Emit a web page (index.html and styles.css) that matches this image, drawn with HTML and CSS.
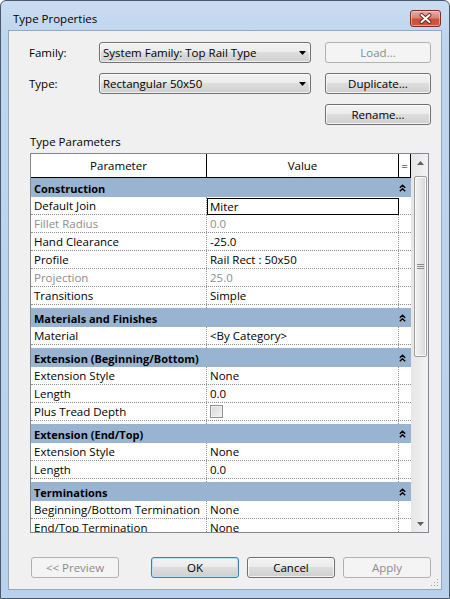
FILE: index.html
```html
<!DOCTYPE html>
<html>
<head>
<meta charset="utf-8">
<title>Type Properties</title>
<link rel="stylesheet" href="styles.css">
</head>
<body>
<div class="window">
  <div class="titlebar">
    <span class="title">Type Properties</span>
    <div class="close">
      <svg width="13" height="11" viewBox="0 0 13 11"><path d="M2.5 2 L10.5 9 M10.5 2 L2.5 9" stroke="#6a2418" stroke-width="3.8" stroke-linecap="round"/><path d="M2.5 2 L10.5 9 M10.5 2 L2.5 9" stroke="#ffffff" stroke-width="2" stroke-linecap="round"/></svg>
    </div>
  </div>
  <div class="client">
    <div class="row">
      <span class="label">Family:</span>
      <div class="combo"><span>System Family: Top Rail Type</span><svg class="arrow" width="7" height="4" viewBox="0 0 7 4"><path d="M0 0 H7 L3.5 4 Z" fill="#000"/></svg></div>
      <div class="btn disabled">Load...</div>
    </div>
    <div class="row">
      <span class="label">Type:</span>
      <div class="combo"><span>Rectangular 50x50</span><svg class="arrow" width="7" height="4" viewBox="0 0 7 4"><path d="M0 0 H7 L3.5 4 Z" fill="#000"/></svg></div>
      <div class="btn">Duplicate...</div>
    </div>
    <div class="row">
      <span class="label"></span>
      <div class="combo-space"></div>
      <div class="btn">Rename...</div>
    </div>

    <div class="section-label">Type Parameters</div>

    <div class="grid">
      <div class="hdr">
        <div>Parameter</div>
        <div>Value</div>
        <div class="eq">=</div>
      </div>
      <div class="scroll">
        <div class="sb-btn"><svg width="7" height="4" viewBox="0 0 7 4"><path d="M0 4 H7 L3.5 0 Z" fill="#606060"/></svg></div>
        <div class="sb-track">
          <div class="thumb">
            <svg width="7" height="5" viewBox="0 0 7 5"><path d="M0 0.5 H7 M0 2.5 H7 M0 4.5 H7" stroke="#8a8a8a" stroke-width="1"/></svg>
          </div>
        </div>
        <div class="sb-btn"><svg width="7" height="4" viewBox="0 0 7 4"><path d="M0 0 H7 L3.5 4 Z" fill="#606060"/></svg></div>
      </div>
      <div class="rows">
        <div class="band">Construction<svg class="chev" width="7" height="8" viewBox="0 0 7 8"><path d="M0.8 3.8 L3.5 1.2 L6.2 3.8 M0.8 7.3 L3.5 4.7 L6.2 7.3" fill="none" stroke="#000" stroke-width="1.4"/></svg></div>
        <div class="prop"><div>Default Join</div><div class="edit">Miter</div><div></div></div>
        <div class="prop dim"><div>Fillet Radius</div><div>0.0</div><div></div></div>
        <div class="prop"><div>Hand Clearance</div><div>-25.0</div><div></div></div>
        <div class="prop"><div>Profile</div><div>Rail Rect : 50x50</div><div></div></div>
        <div class="prop dim"><div>Projection</div><div>25.0</div><div></div></div>
        <div class="prop"><div>Transitions</div><div>Simple</div><div></div></div>
        <div class="gap"><i></i><i></i><i></i></div>

        <div class="band">Materials and Finishes<svg class="chev" width="7" height="8" viewBox="0 0 7 8"><path d="M0.8 3.8 L3.5 1.2 L6.2 3.8 M0.8 7.3 L3.5 4.7 L6.2 7.3" fill="none" stroke="#000" stroke-width="1.4"/></svg></div>
        <div class="prop"><div>Material</div><div>&lt;By Category&gt;</div><div></div></div>
        <div class="gap"><i></i><i></i><i></i></div>

        <div class="band">Extension (Beginning/Bottom)<svg class="chev" width="7" height="8" viewBox="0 0 7 8"><path d="M0.8 3.8 L3.5 1.2 L6.2 3.8 M0.8 7.3 L3.5 4.7 L6.2 7.3" fill="none" stroke="#000" stroke-width="1.4"/></svg></div>
        <div class="prop"><div>Extension Style</div><div>None</div><div></div></div>
        <div class="prop"><div>Length</div><div>0.0</div><div></div></div>
        <div class="prop"><div>Plus Tread Depth</div><div><span class="chk"></span></div><div></div></div>
        <div class="gap"><i></i><i></i><i></i></div>

        <div class="band">Extension (End/Top)<svg class="chev" width="7" height="8" viewBox="0 0 7 8"><path d="M0.8 3.8 L3.5 1.2 L6.2 3.8 M0.8 7.3 L3.5 4.7 L6.2 7.3" fill="none" stroke="#000" stroke-width="1.4"/></svg></div>
        <div class="prop"><div>Extension Style</div><div>None</div><div></div></div>
        <div class="prop"><div>Length</div><div>0.0</div><div></div></div>
        <div class="gap"><i></i><i></i><i></i></div>

        <div class="band">Terminations<svg class="chev" width="7" height="8" viewBox="0 0 7 8"><path d="M0.8 3.8 L3.5 1.2 L6.2 3.8 M0.8 7.3 L3.5 4.7 L6.2 7.3" fill="none" stroke="#000" stroke-width="1.4"/></svg></div>
        <div class="prop"><div>Beginning/Bottom Termination</div><div>None</div><div></div></div>
        <div class="prop"><div>End/Top Termination</div><div>None</div><div></div></div>
      </div>
    </div>

    <div class="btnrow">
      <div class="btn disabled wide">&lt;&lt; Preview</div>
      <div class="btn default wide ok">OK</div>
      <div class="btn wide">Cancel</div>
      <div class="btn disabled wide">Apply</div>
    </div>

    <svg class="grip" width="8" height="8" viewBox="0 0 8 8">
      <rect x="6" y="0" width="1" height="1" fill="#a0a0a0"/>
      <rect x="3" y="3" width="1" height="1" fill="#a0a0a0"/>
      <rect x="6" y="3" width="1" height="1" fill="#a0a0a0"/>
      <rect x="0" y="6" width="1" height="1" fill="#a0a0a0"/>
      <rect x="3" y="6" width="1" height="1" fill="#a0a0a0"/>
      <rect x="6" y="6" width="1" height="1" fill="#a0a0a0"/>
    </svg>
  </div>
</div>
</body>
</html>
```

FILE: styles.css
```css
* { box-sizing: border-box; }
html, body { margin: 0; padding: 0; }
body {
  width: 450px;
  height: 599px;
  overflow: hidden;
  background: #ffffff;
  font-family: "Open Sans", "Noto Sans", sans-serif;
  font-size: 11.5px;
  color: #000;
}

.window {
  width: 450px;
  height: 599px;
  border: 1px solid #49596b;
  border-radius: 6px 6px 0 0;
  background: linear-gradient(to bottom, #cadcf1 0px, #bed5ee 40px, #b9d1eb 100%);
  display: flex;
  flex-direction: column;
  padding: 0 7px 8px 7px;
}

.titlebar {
  height: 29px;
  display: flex;
  align-items: flex-start;
  flex-shrink: 0;
}
.title {
  margin: 10px 0 0 5px;
  line-height: 16px;
  font-size: 11.5px;
  color: #000;
}
.close {
  margin: 9px 1px 0 auto;
  width: 31px;
  height: 17px;
  border: 1px solid #7b2e22;
  border-radius: 3px;
  background: linear-gradient(to bottom, #e9ada2 0%, #dc8372 45%, #c9513b 55%, #c95b43 100%);
  box-shadow: inset 0 0 0 1px rgba(255, 220, 210, 0.5);
  display: flex;
  align-items: center;
  justify-content: center;
}

.client {
  flex: 1;
  background: #f0f0f0;
  border: 1px solid #91a8c3;
  display: flex;
  flex-direction: column;
  padding-top: 11px;
  position: relative;
}

.row {
  display: flex;
  align-items: center;
  height: 21px;
  padding-left: 20px;
  margin-bottom: 10px;
}
.label {
  width: 70px;
  flex-shrink: 0;
}
.combo, .combo-space {
  width: 212px;
  height: 21px;
  flex-shrink: 0;
}
.combo {
  border: 1px solid #707070;
  border-radius: 3px;
  background: linear-gradient(to bottom, #f2f2f2 0%, #ebebeb 50%, #dddddd 50%, #cfcfcf 100%);
  box-shadow: inset 0 0 0 1px rgba(255, 255, 255, 0.7);
  display: flex;
  align-items: center;
  padding: 0 0 0 3px;
  line-height: 19px;
}
.combo span { flex: 1; }
.arrow { margin-right: 4px; }

.btn {
  width: 106px;
  height: 21px;
  margin-left: 14px;
  flex-shrink: 0;
  border: 1px solid #707070;
  border-radius: 3px;
  background: linear-gradient(to bottom, #f2f2f2 0%, #ebebeb 50%, #dddddd 50%, #cfcfcf 100%);
  box-shadow: inset 0 0 0 1px rgba(255, 255, 255, 0.75);
  display: flex;
  align-items: center;
  justify-content: center;
  line-height: 19px;
}
.btn.disabled {
  border-color: #adb2b5;
  background: #f4f4f4;
  box-shadow: none;
  color: #8b8b8b;
}
.btn.default {
  border-color: #3c7fb1;
  box-shadow: inset 0 0 0 1px #b8e2f7;
}

.section-label {
  margin-top: -1px;
  padding-left: 21px;
  line-height: 15px;
  height: 15px;
}

.grid {
  margin: 4px 0 0 21px;
  width: 399px;
  height: 380px;
  flex-shrink: 0;
  border: 1px solid #828790;
  background: #ffffff;
  display: grid;
  grid-template-columns: 380px 17px;
  grid-template-rows: 24px 1fr;
  overflow: hidden;
}

.hdr {
  grid-column: 1;
  grid-row: 1;
  display: grid;
  grid-template-columns: 176px 192px 12px;
  height: 24px;
  border-bottom: 1px solid #000;
  background: #ffffff;
}
.hdr > div {
  display: flex;
  align-items: center;
  justify-content: center;
  border-right: 1px solid #000;
}
.hdr > .eq {
  border-right: 1px solid #000;
}

.scroll {
  grid-column: 2;
  grid-row: 1 / span 2;
  background: linear-gradient(to right, #e6e6e6, #f2f2f2);
  display: flex;
  flex-direction: column;
  padding-left: 1px;
}
.sb-btn {
  height: 17px;
  display: flex;
  align-items: center;
  justify-content: center;
  flex-shrink: 0;
}
.sb-track {
  flex: 1;
  padding: 5px 1px 0 2px;
}
.thumb {
  height: 181px;
  border: 1px solid #9c9c9c;
  border-radius: 2px;
  background: linear-gradient(to right, #f3f3f3, #e4e4e4 60%, #d6d6d6);
  box-shadow: inset 0 0 0 1px #fafafa;
  display: flex;
  align-items: center;
  justify-content: center;
}

.rows {
  grid-column: 1;
  grid-row: 2;
  overflow: hidden;
}
.band {
  height: 19px;
  background: #99b4d1;
  font-weight: bold;
  font-size: 11px;
  display: flex;
  align-items: center;
  padding-left: 3px;
  padding-top: 1px;
  white-space: nowrap;
}
.chev { margin-left: auto; margin-right: 5px; }

.prop {
  display: grid;
  grid-template-columns: 176px 192px 12px;
  height: 18px;
  border-bottom: 1px dotted #8f8f8f;
  background: #ffffff;
}
.prop > div {
  border-right: 1px dotted #8f8f8f;
  padding-left: 3px;
  padding-top: 1px;
  line-height: 16px;
  white-space: nowrap;
  overflow: hidden;
}
.prop > div:last-child { border-right: none; }
.prop.dim > div { color: #8d8d8d; }
.prop > div.edit {
  border: 1px solid #000;
  margin-top: 1px;
  height: 17px;
  line-height: 15px;
  padding-top: 0;
  padding-left: 2px;
}

.gap {
  display: grid;
  grid-template-columns: 176px 192px 12px;
  height: 3px;
  background: #ffffff;
}
.gap i:nth-child(1), .gap i:nth-child(2) { border-right: 1px dotted #8f8f8f; }

.chk {
  display: inline-block;
  width: 13px;
  height: 13px;
  margin-top: 1px;
  vertical-align: top;
  border: 1px solid #8e8f8f;
  background: linear-gradient(135deg, #d6d6d6, #f4f4f4);
  box-shadow: inset 0 0 0 1px #f0f0f0;
}

.btnrow {
  display: flex;
  margin-top: 24px;
  padding-left: 22px;
}
.btn.wide { width: 88px; margin-left: 8px; }
.btn.wide:first-child { margin-left: 0; }
.btn.wide.ok { margin-left: 32px; }

.grip {
  position: absolute;
  right: 2px;
  bottom: 2px;
}
```
